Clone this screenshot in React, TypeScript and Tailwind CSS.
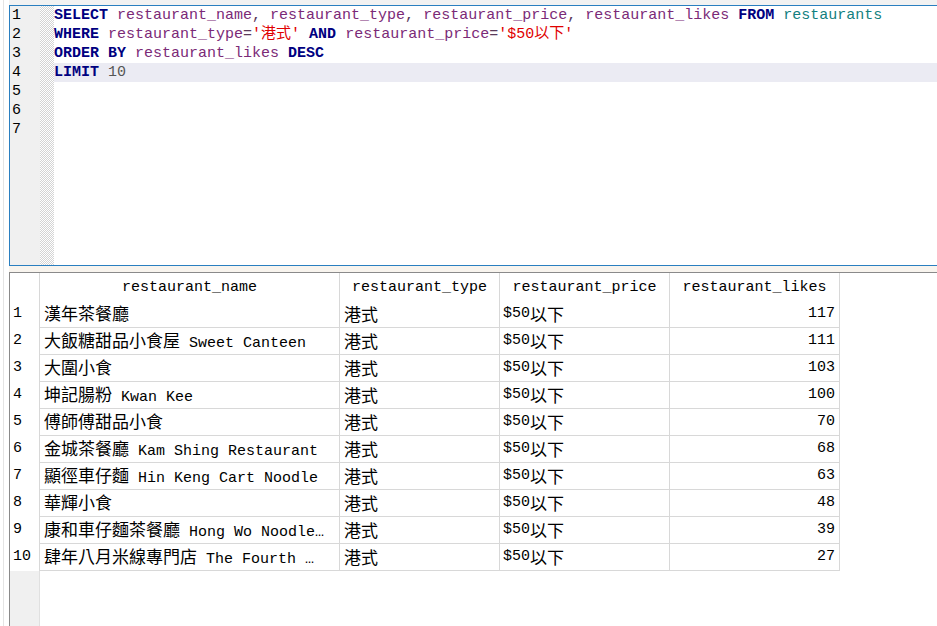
import React from 'react';

const mono = 'font-["Liberation_Mono","Noto_Sans_CJK_TC",monospace]';

type Tok = [string, string];

const code: Tok[][] = [
  [
    ['SELECT', 'kw'], [' ', ''], ['restaurant_name', 'id'], [', ', 'p'], ['restaurant_type', 'id'], [', ', 'p'],
    ['restaurant_price', 'id'], [', ', 'p'], ['restaurant_likes', 'id'], [' ', ''], ['FROM', 'kw'], [' ', ''],
    ['restaurants', 'tb'],
  ],
  [
    ['WHERE', 'kw'], [' ', ''], ['restaurant_type', 'id'], ['=', 'p'], ["'港式'", 'str'], [' ', ''], ['AND', 'kw'],
    [' ', ''], ['restaurant_price', 'id'], ['=', 'p'], ["'$50以下'", 'str'],
  ],
  [['ORDER BY', 'kw'], [' ', ''], ['restaurant_likes', 'id'], [' ', ''], ['DESC', 'kw']],
  [['LIMIT', 'kw'], [' ', ''], ['10', 'num']],
  [],
  [],
  [],
];

const tokClass: Record<string, string> = {
  kw: 'font-bold text-[#000080]',
  id: 'text-[#7b2a77]',
  p: 'text-[#5a3a5a]',
  str: 'text-[#e00000]',
  tb: 'text-[#128080]',
  num: 'text-[#555555]',
  '': '',
};

const rows: [string, number][] = [
  ['漢年茶餐廳', 117],
  ['大飯糖甜品小食屋 Sweet Canteen', 111],
  ['大圍小食', 103],
  ['坤記腸粉 Kwan Kee', 100],
  ['傅師傅甜品小食', 70],
  ['金城茶餐廳 Kam Shing Restaurant', 68],
  ['顯徑車仔麵 Hin Keng Cart Noodle', 63],
  ['華輝小食', 48],
  ['康和車仔麵茶餐廳 Hong Wo Noodle…', 39],
  ['肆年八月米線專門店 The Fourth …', 27],
];

// CJK runs render a little larger, like the SimSun glyphs in the grid
function Mixed({ text }: { text: string }) {
  const parts = text.split(/([\u3000-\u9fff\uff00-\uffef]+)/).filter(Boolean);
  return (
    <>
      {parts.map((p, i) =>
        /[\u3000-\u9fff\uff00-\uffef]/.test(p) ? (
          <span key={i} className='text-[17px] font-["Noto_Sans_CJK_TC",sans-serif]'>
            {p}
          </span>
        ) : (
          <span key={i}>{p}</span>
        )
      )}
    </>
  );
}

function Editor() {
  return (
    <div className="flex h-[261px] border-t border-l border-b border-[#2a7fc0] bg-white">
      <div className={`w-[30px] shrink-0 bg-[#f0f0f0] pt-[0px] pl-[2px] text-[15px] leading-[19px] text-black ${mono}`}>
        {code.map((_, i) => (
          <div key={i}>{i + 1}</div>
        ))}
      </div>
      <div className="w-[14px] shrink-0 bg-[image:repeating-conic-gradient(#d4d4d4_0%_25%,#ffffff_0%_50%)] bg-[length:2px_2px]" />
      <div className={`flex-1 text-[15px] leading-[19px] whitespace-pre ${mono}`}>
        {code.map((line, i) => (
          <div key={i} className={`h-[19px] ${i === 3 ? 'bg-[#ebebf3]' : ''}`}>
            {line.map(([t, c], j) => (
              <span key={j} className={tokClass[c]}>
                {t}
              </span>
            ))}
          </div>
        ))}
      </div>
    </div>
  );
}

const cols = ['restaurant_name', 'restaurant_type', 'restaurant_price', 'restaurant_likes'];
const colW = ['w-[300px]', 'w-[160px]', 'w-[170px]', 'w-[170px]'];

function Grid() {
  return (
    <div className={`flex flex-1 flex-col border-t border-l border-[#8a8a8a] text-[15px] text-black ${mono}`}>
      <div className="flex h-[28px]">
        <div className="w-[30px] shrink-0 border-r border-[#d8d8d8]" />
        {cols.map((c, i) => (
          <div key={c} className={`${colW[i]} flex shrink-0 items-center justify-center border-r border-[#d8d8d8] pt-[2px]`}>
            {c}
          </div>
        ))}
      </div>
      {rows.map(([name, likes], i) => (
        <div key={i} className="flex h-[27px]">
          <div className="flex w-[30px] shrink-0 items-center border-r border-[#d8d8d8] pl-[3px]">{i + 1}</div>
          <div className={`${colW[0]} flex shrink-0 items-center overflow-hidden border-r border-b border-[#d8d8d8] pl-[4px]`}>
            <div className="truncate">
              <Mixed text={name} />
            </div>
          </div>
          <div className={`${colW[1]} flex shrink-0 items-center border-r border-b border-[#d8d8d8] pl-[4px]`}>
            <Mixed text="港式" />
          </div>
          <div className={`${colW[2]} flex shrink-0 items-center border-r border-b border-[#d8d8d8] pl-[3px]`}>
            <Mixed text="$50以下" />
          </div>
          <div className={`${colW[3]} flex shrink-0 items-center justify-end border-r border-b border-[#d8d8d8] pr-[4px]`}>
            {likes}
          </div>
        </div>
      ))}
      <div className="flex flex-1">
        <div className="w-[30px] shrink-0 border-r border-[#e0e0e0] bg-[#f0f0f0]" />
      </div>
    </div>
  );
}

export default function App() {
  return (
    <div className="flex h-[626px] w-[937px] overflow-hidden bg-white">
      {/* left margin */}
      <div className="flex w-[9px] shrink-0 pl-[3px]">
        <div className="w-px bg-[#e4e4e4]" />
      </div>
      <div className="flex flex-1 flex-col">
        <div className="h-[5px] shrink-0 bg-[#f2f2f2]" />
        <Editor />
        <div className="h-[6px] shrink-0 bg-[#f8f4ee]" />
        <Grid />
      </div>
    </div>
  );
}
